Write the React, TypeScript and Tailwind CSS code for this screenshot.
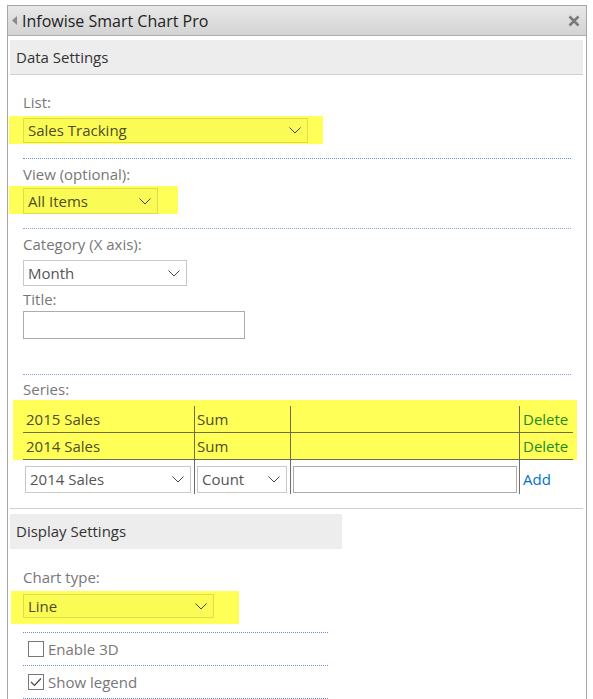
import React from "react";

const Chevron = () => (
  <svg width="12" height="7" viewBox="0 0 12 7" className="shrink-0">
    <polyline points="0.5,0.5 6,6 11.5,0.5" fill="none" stroke="#444" strokeWidth="1" />
  </svg>
);

const Select = ({ label, className, hl }: { label: string; className: string; hl?: boolean }) => (
  <div
    className={`flex items-center justify-between pl-[4px] pr-[6px] border ${
      hl ? "border-[#dcdc4c] bg-[#fbfb55] text-[#4d4d2a]" : "border-[#c8c8c8] bg-white text-[#555]"
    } ${className}`}
  >
    <span>{label}</span>
    <Chevron />
  </div>
);

const Dotted = ({ className }: { className: string }) => (
  <div className={`border-t border-dotted border-[#6d8fd4] ${className}`} />
);

const Checkbox = ({ checked }: { checked?: boolean }) => (
  <div className="w-[16px] h-[16px] border border-[#777] bg-white flex items-center justify-center shrink-0">
    {checked && (
      <svg width="12" height="10" viewBox="0 0 12 10">
        <polyline points="1,5 4.5,8.5 11,1.5" fill="none" stroke="#444" strokeWidth="1.2" />
      </svg>
    )}
  </div>
);

export default function App() {
  return (
    <div className="w-[593px] h-[699px] bg-white overflow-hidden pt-[5px] text-[15px]" style={{ fontFamily: "'Open Sans', 'Noto Sans', sans-serif" }}>
      <div className="ml-[7px] w-[580px] h-[700px] border-x border-t border-[#a6a6a6]">
        {/* title bar */}
        <div className="h-[30px] flex items-center justify-between bg-gradient-to-b from-[#e8e8e8] to-[#d3d3d3] border-b border-[#b0b0b0] pl-[4px] pr-[6px]">
          <div className="flex items-center gap-[4px]">
            <svg width="6" height="9" viewBox="0 0 6 9">
              <polygon points="5,0 0,4.5 5,9" fill="#8a8a8a" />
            </svg>
            <span className="text-[16px] text-[#222]">Infowise Smart Chart Pro</span>
          </div>
          <svg width="12" height="12" viewBox="0 0 12 12">
            <path d="M1.5 1.5 L10.5 10.5 M10.5 1.5 L1.5 10.5" stroke="#7a7a7a" strokeWidth="2.6" />
          </svg>
        </div>

        {/* Data settings header */}
        <div className="mt-[4px] ml-[2px] w-[573px] h-[35px] bg-[#ededed] border-b border-[#cfcfcf] flex items-center pl-[6px] text-[#333]">
          Data Settings
        </div>

        <div className="mt-[17px] ml-[15px] h-[20px] leading-[20px] text-[#777]">List:</div>
        <div className="mt-[4px] ml-[1px] w-[314px] h-[28px] bg-[#ffff57] pl-[14px] pt-[2px]">
          <Select label="Sales Tracking" className="w-[285px] h-[25px]" hl />
        </div>
        <Dotted className="mt-[14px] ml-[15px] w-[548px]" />

        <div className="mt-[5px] ml-[15px] h-[20px] leading-[20px] text-[#777]">View (optional):</div>
        <div className="mt-[2px] ml-[1px] w-[169px] h-[28px] bg-[#ffff57] pl-[14px] pt-[2px]">
          <Select label="All Items" className="w-[135px] h-[26px]" hl />
        </div>
        <Dotted className="mt-[14px] ml-[15px] w-[548px] border-[#8ea4d8]" />

        <div className="mt-[5px] ml-[15px] h-[20px] leading-[20px] text-[#777]">Category (X axis):</div>
        <div className="mt-[6px] ml-[15px]">
          <Select label="Month" className="w-[164px] h-[26px]" />
        </div>
        <div className="mt-[3px] ml-[15px] h-[20px] leading-[20px] text-[#777]">Title:</div>
        <div className="mt-[2px] ml-[15px] w-[222px] h-[28px] border border-[#ababab] bg-white" />
        <Dotted className="mt-[35px] ml-[15px] w-[548px] border-[#8ea4d8]" />

        <div className="mt-[4px] ml-[15px] h-[20px] leading-[20px] text-[#777]">Series:</div>

        {/* series table */}
        <div className="mt-[1px] ml-[5px] w-[564px] bg-[#ffff57] pt-[6px] pl-[10px]">
          {[
            ["2015 Sales", "Sum"],
            ["2014 Sales", "Sum"],
          ].map(([a, b], i) => (
            <div key={i} className="flex w-[550px] h-[27px] border-b border-[#6e6e4a] text-[#4d4d2a] leading-[27px]">
              <div className="w-[171px] pl-[3px]">{a}</div>
              <div className="w-[96px] border-l border-[#6e6e4a] pl-[2px]">{b}</div>
              <div className="w-[229px] border-l border-[#6e6e4a]" />
              <div className="flex-1 border-l border-[#6e6e4a] pl-[3px] text-[#1f8a1f]">Delete</div>
            </div>
          ))}
        </div>
        <div className="ml-[15px] flex w-[550px] h-[34px]">
          <div className="w-[171px] pt-[6px] pl-[2px]">
            <Select label="2014 Sales" className="w-[166px] h-[27px]" />
          </div>
          <div className="w-[96px] border-l border-[#6e6e6e] pt-[6px] pl-[2px]">
            <Select label="Count" className="w-[90px] h-[27px]" />
          </div>
          <div className="w-[229px] border-l border-[#6e6e6e] pt-[6px] pl-[2px]">
            <div className="w-[224px] h-[27px] border border-[#ababab] bg-white" />
          </div>
          <div className="flex-1 border-l border-[#6e6e6e] pl-[3px] pt-[8px] text-[#0072c6] leading-[22px]">Add</div>
        </div>

        <div className="mt-[14px] ml-[2px] w-[573px] border-t border-[#cfcfcf]" />

        {/* Display settings */}
        <div className="mt-[5px] ml-[2px] w-[332px] h-[35px] bg-[#ededed] flex items-center pl-[6px] text-[#333]">
          Display Settings
        </div>
        <div className="mt-[18px] ml-[15px] h-[20px] leading-[20px] text-[#777]">Chart type:</div>
        <div className="mt-[4px] ml-[3px] w-[228px] h-[33px] bg-[#ffff57] pl-[12px] pt-[3px]">
          <Select label="Line" className="w-[191px] h-[24px]" hl />
        </div>
        <Dotted className="mt-[8px] ml-[15px] w-[305px]" />
        <div className="ml-[20px] h-[32px] flex items-center gap-[4px] text-[#777]">
          <Checkbox />
          <span>Enable 3D</span>
        </div>
        <Dotted className="ml-[15px] w-[305px]" />
        <div className="ml-[20px] h-[32px] flex items-center gap-[4px] text-[#777]">
          <Checkbox checked />
          <span>Show legend</span>
        </div>
        <Dotted className="ml-[15px] w-[305px]" />
      </div>
    </div>
  );
}
